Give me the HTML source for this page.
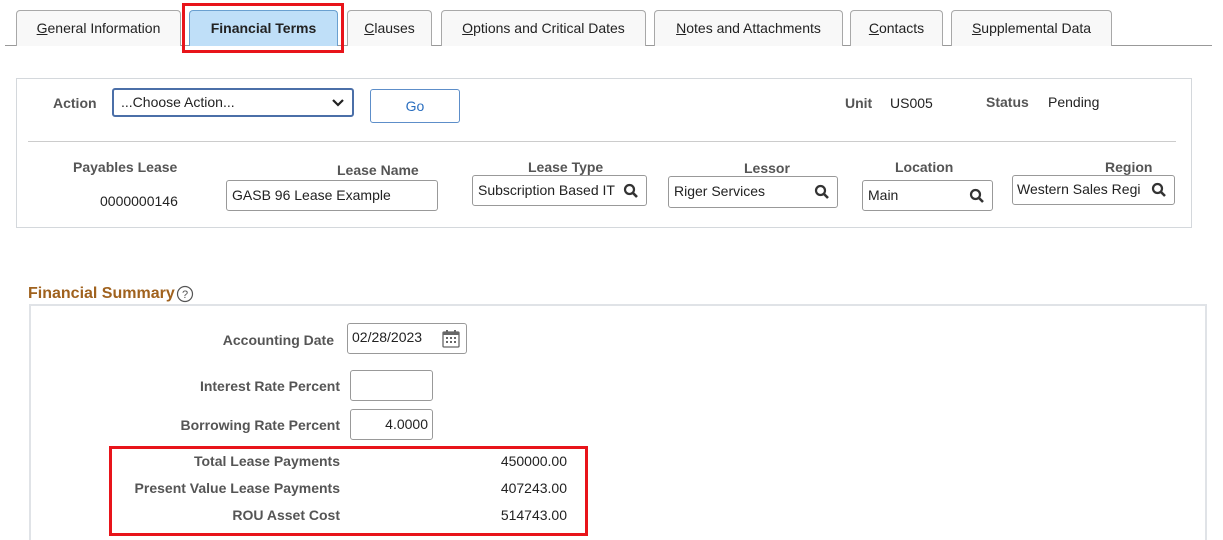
<!DOCTYPE html>
<html><head><meta charset="utf-8"><style>
*{box-sizing:border-box;margin:0;padding:0}
html,body{width:1223px;height:540px;overflow:hidden}
body{background:#fff;font-family:"Liberation Sans",Arial,sans-serif;font-size:14px;color:#333;position:relative}
.a{position:absolute;white-space:nowrap}
.tab{position:absolute;top:10px;height:36px;border:1px solid #a8a8a8;border-bottom:none;border-radius:4px 4px 0 0;background:#f8f8f8;text-align:center;line-height:34px;color:#222;font-size:14px}
.tab u{text-decoration:underline}
.lbl{color:#555;font-weight:bold}
.in{position:absolute;border:1px solid #999;border-radius:3px;background:#fff;color:#222;padding-left:5px;font-size:14px;overflow:hidden;white-space:nowrap}
.mag{position:absolute;right:7px;top:50%;margin-top:-8px}
.r{text-align:right}
</style></head><body>
<div class="a" style="left:5px;top:45px;width:1207px;height:1px;background:#999"></div>
<div class="tab" style="left:16px;width:165px"><u>G</u>eneral Information</div>
<div class="tab" style="left:189px;width:149px;background:#bfdff8;border-color:#6aa0d0;font-weight:bold;color:#222">Financial Terms</div>
<div class="a" style="left:182px;top:3px;width:162px;height:50px;border:3px solid #e8141a"></div>
<div class="tab" style="left:347px;width:85px"><u>C</u>lauses</div>
<div class="tab" style="left:441px;width:205px"><u>O</u>ptions and Critical Dates</div>
<div class="tab" style="left:654px;width:189px"><u>N</u>otes and Attachments</div>
<div class="tab" style="left:850px;width:93px"><u>C</u>ontacts</div>
<div class="tab" style="left:951px;width:161px"><u>S</u>upplemental Data</div>

<div class="a" style="left:16px;top:78px;width:1176px;height:150px;border:1px solid #d4d8dc"></div>
<div class="a lbl" style="left:53px;top:95px">Action</div>
<div class="in" style="left:112px;top:88px;width:242px;height:29px;border:2px solid #4b6fa8;line-height:25px;padding-left:7px">...Choose Action...<svg style="position:absolute;right:8px;top:9px" width="12" height="8" viewBox="0 0 12 8"><path d="M1 1l5 5 5-5" stroke="#222" stroke-width="2.2" fill="none"/></svg></div>
<div class="a" style="left:370px;top:89px;width:90px;height:34px;border:1px solid #5d8ec9;border-radius:3px;text-align:center;line-height:32px;color:#2a6ebf">Go</div>
<div class="a lbl" style="left:845px;top:95px">Unit</div>
<div class="a" style="left:890px;top:95px;color:#222">US005</div>
<div class="a lbl" style="left:986px;top:94px">Status</div>
<div class="a" style="left:1048px;top:94px;color:#222">Pending</div>
<div class="a" style="left:28px;top:141px;width:1148px;height:1px;background:#ccc"></div>

<div class="a lbl" style="left:73px;top:159px">Payables Lease</div>
<div class="a" style="left:100px;top:193px;color:#222">0000000146</div>
<div class="a lbl" style="left:337px;top:162px">Lease Name</div>
<div class="in" style="left:226px;top:180px;width:212px;height:31px;line-height:29px">GASB 96 Lease Example</div>
<div class="a lbl" style="left:528px;top:159px">Lease Type</div>
<div class="in" style="left:472px;top:175px;width:175px;height:31px;line-height:29px;padding-right:24px">Subscription Based IT<svg class="mag" width="16" height="16" viewBox="0 0 16 16"><circle cx="6.5" cy="6.5" r="4.5" stroke="#333" stroke-width="2.2" fill="none"/><path d="M10 10l4 4" stroke="#333" stroke-width="2.6"/></svg></div>
<div class="a lbl" style="left:744px;top:160px">Lessor</div>
<div class="in" style="left:668px;top:176px;width:170px;height:32px;line-height:29px">Riger Services<svg class="mag" width="16" height="16" viewBox="0 0 16 16"><circle cx="6.5" cy="6.5" r="4.5" stroke="#333" stroke-width="2.2" fill="none"/><path d="M10 10l4 4" stroke="#333" stroke-width="2.6"/></svg></div>
<div class="a lbl" style="left:895px;top:159px">Location</div>
<div class="in" style="left:862px;top:180px;width:131px;height:31px;line-height:29px">Main<svg class="mag" width="16" height="16" viewBox="0 0 16 16"><circle cx="6.5" cy="6.5" r="4.5" stroke="#333" stroke-width="2.2" fill="none"/><path d="M10 10l4 4" stroke="#333" stroke-width="2.6"/></svg></div>
<div class="a lbl" style="left:1105px;top:159px">Region</div>
<div class="in" style="left:1012px;top:175px;width:163px;height:30px;line-height:27px;padding-left:4px">Western Sales Regi<svg class="mag" width="16" height="16" viewBox="0 0 16 16"><circle cx="6.5" cy="6.5" r="4.5" stroke="#333" stroke-width="2.2" fill="none"/><path d="M10 10l4 4" stroke="#333" stroke-width="2.6"/></svg></div>

<div class="a" style="left:28px;top:285px;font-size:16px;font-weight:bold;color:#a0621e">Financial Summary</div>
<svg class="a" style="left:176px;top:285px" width="18" height="18" viewBox="0 0 18 18"><circle cx="9" cy="9" r="7.5" stroke="#555" stroke-width="1.2" fill="none"/><text x="9" y="13" font-size="11" text-anchor="middle" fill="#555" font-family="Liberation Sans">?</text></svg>
<div class="a" style="left:29px;top:304px;width:1178px;height:236px;border:2px solid #e0e3e7;border-bottom:none"></div>

<div class="a lbl" style="left:100px;top:332px;width:234px;text-align:right">Accounting Date</div>
<div class="in" style="left:347px;top:323px;width:120px;height:31px;line-height:27px;padding-left:4px">02/28/2023<svg style="position:absolute;right:6px;top:5px" width="18" height="19" viewBox="0 0 18 19"><rect x="1" y="3" width="16" height="15" rx="1" fill="none" stroke="#666" stroke-width="1.3"/><rect x="1" y="3" width="16" height="3" fill="#666"/><rect x="4" y="1" width="2" height="4" fill="#666"/><rect x="12" y="1" width="2" height="4" fill="#666"/><g fill="#666"><rect x="4" y="8" width="2" height="2"/><rect x="8" y="8" width="2" height="2"/><rect x="12" y="8" width="2" height="2"/><rect x="4" y="12" width="2" height="2"/><rect x="8" y="12" width="2" height="2"/><rect x="12" y="12" width="2" height="2"/></g></svg></div>
<div class="a lbl" style="left:100px;top:378px;width:240px;text-align:right">Interest Rate Percent</div>
<div class="in" style="left:350px;top:370px;width:83px;height:31px"></div>
<div class="a lbl" style="left:100px;top:417px;width:240px;text-align:right">Borrowing Rate Percent</div>
<div class="in" style="left:350px;top:409px;width:83px;height:31px;line-height:29px;text-align:right;padding-right:4px">4.0000</div>

<div class="a" style="left:109px;top:446px;width:479px;height:90px;border:3px solid #e8141a"></div>
<div class="a lbl" style="left:100px;top:453px;width:240px;text-align:right">Total Lease Payments</div>
<div class="a r" style="left:440px;top:453px;width:127px;color:#222">450000.00</div>
<div class="a lbl" style="left:100px;top:480px;width:240px;text-align:right">Present Value Lease Payments</div>
<div class="a r" style="left:440px;top:480px;width:127px;color:#222">407243.00</div>
<div class="a lbl" style="left:100px;top:507px;width:240px;text-align:right">ROU Asset Cost</div>
<div class="a r" style="left:440px;top:507px;width:127px;color:#222">514743.00</div>
</body></html>
